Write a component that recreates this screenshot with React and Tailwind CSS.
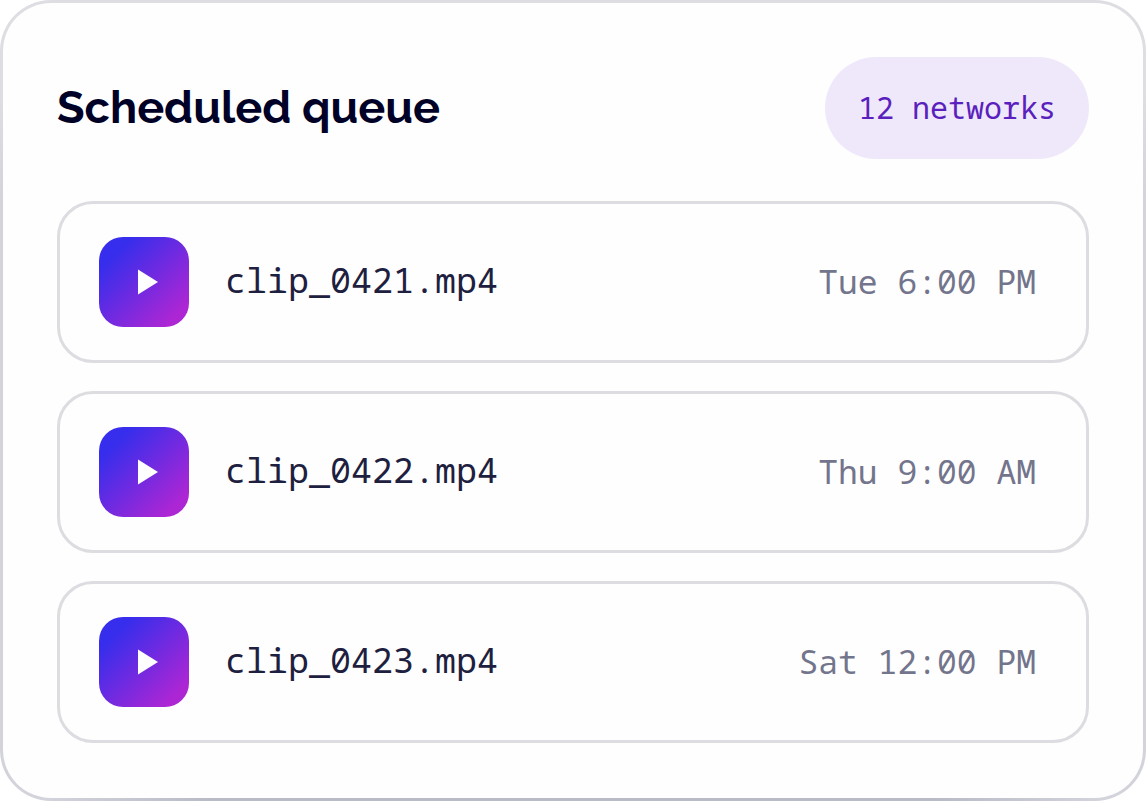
import React from "react";

const clips = [
  { name: "clip_0421.mp4", time: "Tue 6:00 PM" },
  { name: "clip_0422.mp4", time: "Thu 9:00 AM" },
  { name: "clip_0423.mp4", time: "Sat 12:00 PM" },
];

function PlayTile() {
  return (
    <span className="flex size-[90px] shrink-0 items-center justify-center rounded-3xl bg-linear-135/srgb from-[#362eec] from-18% to-[#ac26d4] to-86%">
      <svg viewBox="0 0 90 90" className="size-full" aria-hidden="true">
        <path d="M39 32.5 L59 45 L39 57.5 Z" fill="#ffffff" />
      </svg>
    </span>
  );
}

function ClipRow({ name, time }) {
  return (
    <li className="flex items-center gap-9 rounded-[36px] border-3 border-[#dcdce1] py-[33px] pr-[50px] pl-[39px]">
      <PlayTile />
      <span className="flex-1 pb-1 text-[35px] leading-12 text-[#1e2040]">{name}</span>
      <time className="text-[33px] leading-12 text-[#73758c]">{time}</time>
    </li>
  );
}

export default function App() {
  return (
    <main className="rounded-[51px] border-3 border-transparent p-[54px] pb-[55px] font-['Noto_Sans_Mono','DejaVu_Sans_Mono',monospace] [background:linear-gradient(#fefefe,#fefefe)_padding-box,linear-gradient(90deg,transparent_4%,#b9bbc7_18%,#b9bbc7_82%,transparent_96%)_bottom/100%_3px_no-repeat_border-box,linear-gradient(#dddde2_12%,#d2d3db_26%,#d2d3db)_border-box]">
      <header className="mb-[42px] flex items-center justify-between">
        <h1 className="font-['Raleway','Lato',sans-serif] text-[45px] font-bold text-[#000126]">
          Scheduled queue
        </h1>
        <span className="rounded-full bg-[#efe8fb] px-[33px] text-[30px] leading-[102px] text-[#5a1fbd]">
          12 networks
        </span>
      </header>
      <ul className="flex flex-col gap-7">
        {clips.map((clip) => (
          <ClipRow key={clip.name} {...clip} />
        ))}
      </ul>
    </main>
  );
}
